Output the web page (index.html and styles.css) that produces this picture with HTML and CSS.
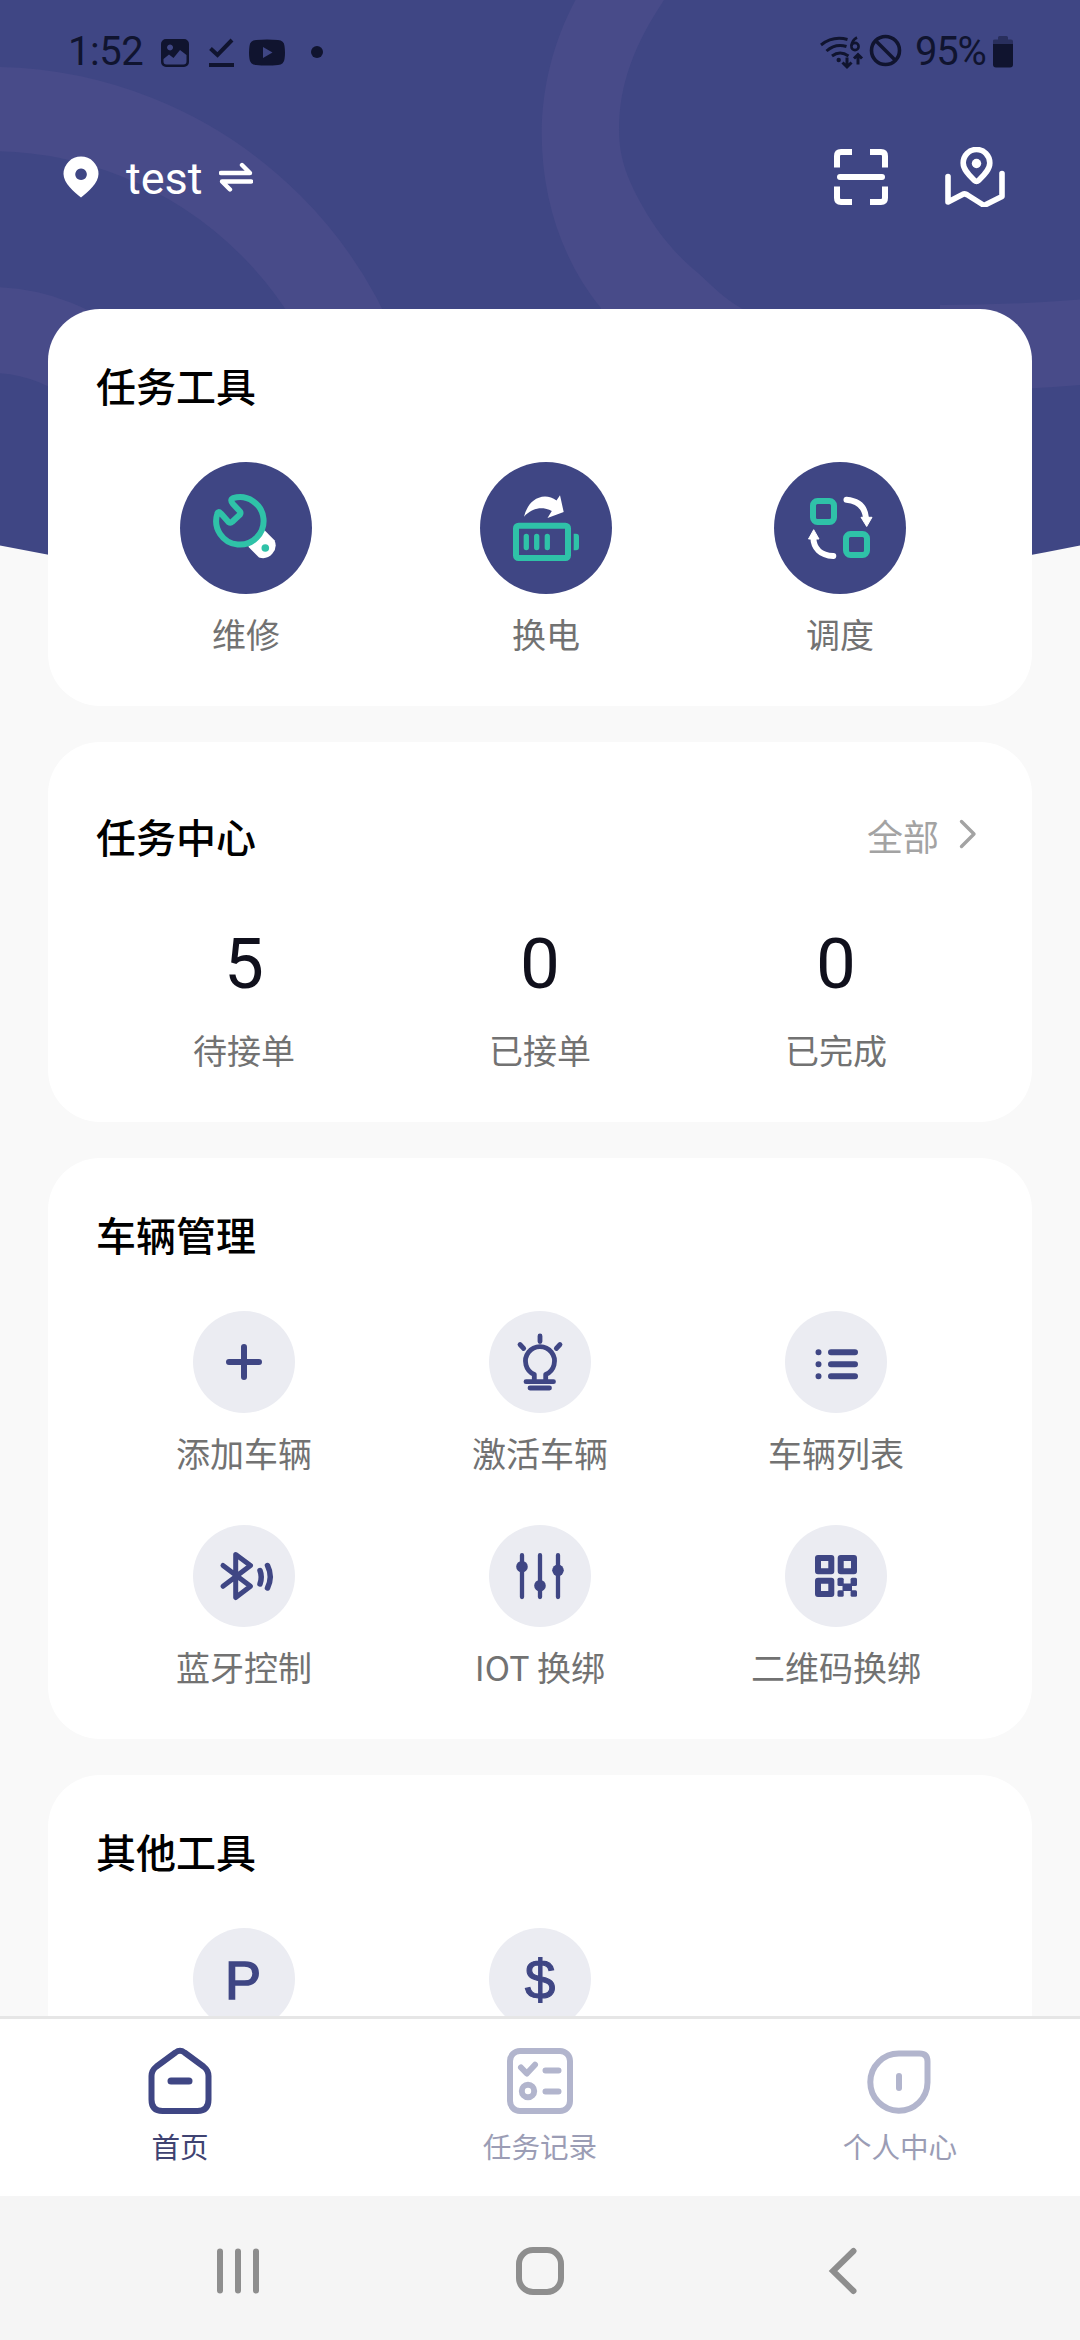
FILE: index.html
```html
<!DOCTYPE html>
<html lang="zh-CN">
<head>
<meta charset="utf-8">
<title>首页</title>
<link rel="stylesheet" href="styles.css">
</head>
<body>
<div class="screen">
  <svg class="backdrop" viewBox="0 0 1080 602" aria-hidden="true">
    <path class="backdrop-base" d="M0 0H1080V545.500Q540 655 0 545.500Z"/>
    <g class="backdrop-rings">
      <circle cx="-10" cy="506" r="397" stroke-width="84"/>
      <circle cx="-10" cy="506" r="176" stroke-width="86"/>
      <path class="solid" d="M575.500 0C553 42 542 88 541.700 133C541.700 195 560 258 601 308V330H780L741 308C725 299 711 285 698 273C675 254 657 232 643 207C629 182 619 160 619 130C619 85 634 45 664 0Z"/>
      <path class="solid" d="M940 305Q1010 305 1080 299.500V385Q1010 391 940 391Z"/>
    </g>
  </svg>

  <div class="status">
    <span class="clock">1:52</span>
    <svg class="status-left" width="170" height="36" viewBox="158 34 170 36">
      <path fill-rule="evenodd" d="M166 39H184a5 5 0 0 1 5 5V62a5 5 0 0 1-5 5H166a5 5 0 0 1-5-5V44a5 5 0 0 1 5-5ZM170 44.500a3 3 0 1 0 .1 0ZM163.500 59V61.500a3 3 0 0 0 3 3H183.500a3 3 0 0 0 3-3V55L180 50L173.500 58L169 54.500Z"/>
      <path class="line" stroke-width="4" d="M210.500 48.500L217.500 55L232 40M209 65H234"/>
      <path fill-rule="evenodd" d="M256 40Q267 39 278 40Q284 40.500 284.500 46Q285.500 53 284.500 59Q284 64.500 278 65Q267 66 256 65Q250 64.500 249.500 59Q248.500 53 249.500 46Q250 40.500 256 40ZM263 47V58L272.500 52.500Z"/>
      <circle cx="317" cy="52" r="6"/>
    </svg>
    <svg class="status-wifi" width="84" height="38" viewBox="819 33 84 38">
      <path class="line" stroke-width="3" d="M821 45Q833 35.500 847.500 39.500M826.500 51Q835.500 43 846.500 46.500M832 56Q840 50 848.500 56M847 57.500V66M842.500 62.500L847 67L851.500 62.500M858 64.500V54.500M854 58.500L858 54.500L862 58.500"/>
      <circle cx="838.700" cy="60" r="2.200"/>
      <circle class="line" cx="855" cy="46.500" r="3.600" stroke-width="2.600"/>
      <path class="line" stroke-width="2.600" d="M857 37.500Q852 40 851.500 46"/>
      <circle class="line" cx="885.500" cy="50.500" r="14" stroke-width="3.600"/>
      <path class="line" stroke-width="3.600" d="M876 41L895 60"/>
    </svg>
    <span class="battery-text">95%</span>
    <svg class="battery" width="20" height="32" viewBox="0 0 20 32">
      <path opacity=".45" d="M0 8V4.500Q0 3.500 2 3.500H5V1.500Q5 0 6.500 0H13.500Q15 0 15 1.500V3.500H18Q20 3.500 20 5.500V8Z"/>
      <path d="M0 8H20V28.500Q20 31.500 17 31.500H3Q0 31.500 0 28.500Z"/>
    </svg>
  </div>

  <header class="topbar">
    <svg width="36" height="42" viewBox="0 0 36 42" fill="#fff"><path fill-rule="evenodd" d="M18 .5A17.500 17.500 0 0 1 35.500 18C35.500 27 25 36 18 41.500C11 36 .5 27 .5 18A17.500 17.500 0 0 1 18 .5ZM18 12.500a5.800 5.800 0 1 0 .1 0Z"/></svg>
    <span class="site">test</span>
    <svg class="swap" width="34" height="30" viewBox="0 0 34 30"><path d="M2 11H31L23 3M32 19.500H3L11 27.500"/></svg>
    <svg class="scan" width="54" height="56" viewBox="0 0 54 56"><path d="M18 3H7Q3 3 3 7V18.500M36 3H47Q51 3 51 7V18.500M18 53H7Q3 53 3 49V37.500M36 53H47Q51 53 51 49V37.500"/><path class="round" d="M6 28H48"/></svg>
    <svg class="map" width="60" height="60" viewBox="0 0 60 60"><path d="M31.500 2.500C39 2.500 44.800 8.500 44.800 16C44.800 23 38 29 33.500 33.500Q31.500 35.500 29.500 33.500C25 29 18.200 23 18.200 16C18.200 8.500 24 2.500 31.500 2.500ZM3 29.500V55L17.500 47.500Q20 46 22.500 48L37.500 57.500Q39 58.500 41 57.500L57 49.500V26.500"/><circle cx="31.500" cy="16.500" r="4.700"/></svg>
  </header>

  <main class="cards">
    <section class="card card-tools">
      <h2>任务工具</h2>
      <div class="grid grid-tools">
        <div class="item">
          <svg class="disc" viewBox="0 0 132 132"><circle class="disc-dark" cx="66" cy="66" r="66"/>
            <path fill="#fff" d="M84.300 68L94.500 78.200A12.800 12.800 0 0 1 79 95.500L68.300 84.700Z"/>
            <path class="teal-line" stroke-width="6" d="M53 42L60 49.500Q61 51 60 52.500L52 60Q50.500 61.500 48.500 60L41 51.500Q38 48.500 37.200 52A23.700 23.700 0 1 0 53 36.200Q49.500 38 53 42Z"/>
            <circle class="teal" cx="85.300" cy="86" r="3.800"/></svg>
          <span>维修</span>
        </div>
        <div class="item">
          <svg class="disc" viewBox="0 0 132 132"><circle class="disc-dark" cx="66" cy="66" r="66"/>
            <path fill="#fff" d="M44 54.700C47 43 54 35 65 34.500Q71 34.500 76.500 38.500L80 33.300L83.700 50L67.500 56L71.800 49C62 43.500 51 46.500 44 54.700Z"/>
            <rect class="teal-line" x="36" y="63.700" width="52" height="32.300" rx="2.500" stroke-width="6"/>
            <path class="teal-line" stroke-width="5.300" d="M46.300 74.500V85.500M56.700 74.500V85.500M67.300 74.500V85.500"/>
            <path class="teal" d="M93.700 71.700H96Q99 71.700 99 75V85Q99 88.300 96 88.300H93.700Z"/></svg>
          <span>换电</span>
        </div>
        <div class="item">
          <svg class="disc" viewBox="0 0 132 132"><circle class="disc-dark" cx="66" cy="66" r="66"/>
            <rect class="teal-line" x="39" y="39" width="21" height="21" rx="4.500" stroke-width="6"/>
            <rect class="teal-line" x="72" y="72" width="21" height="21" rx="4.500" stroke-width="6"/>
            <path class="white-line" d="M72.500 37.800C85 39 91 45 92 56M59.300 94C46 93.500 39.500 86 39.300 75"/>
            <path fill="#fff" stroke="#fff" stroke-linejoin="round" d="M87 55.300H98L92.700 64.500ZM34.500 77H45L39.700 67.700Z"/></svg>
          <span>调度</span>
        </div>
      </div>
    </section>

    <section class="card card-center">
      <div class="card-head">
        <h2>任务中心</h2>
        <span class="more">全部</span>
        <svg class="chevron" width="18" height="30" viewBox="0 0 18 30"><path d="M2.500 2.500L15 15L2.500 27.500"/></svg>
      </div>
      <div class="grid">
        <div class="stat"><b>5</b><span>待接单</span></div>
        <div class="stat"><b>0</b><span>已接单</span></div>
        <div class="stat"><b>0</b><span>已完成</span></div>
      </div>
    </section>

    <section class="card card-vehicles">
      <h2>车辆管理</h2>
      <div class="grid">
        <div class="item">
          <svg class="dot" viewBox="0 0 102 102"><circle class="disc-light" cx="51" cy="51" r="51"/><path class="ink" stroke-width="6" d="M51 36V66M36 51H66"/></svg>
          <span>添加车辆</span>
        </div>
        <div class="item">
          <svg class="dot" viewBox="0 0 102 102"><circle class="disc-light" cx="51" cy="51" r="51"/>
            <path class="ink" stroke-width="4.800" d="M45.300 69V63.500A14.500 14.500 0 1 1 56.700 63.500V69M37 70.700H64.500M41 77H60.500M51 25V30.500M31 33.500L34.700 37.500M71 33.500L67.300 37.500"/></svg>
          <span>激活车辆</span>
        </div>
        <div class="item">
          <svg class="dot" viewBox="0 0 102 102"><circle class="disc-light" cx="51" cy="51" r="51"/><path class="ink" stroke-width="6" d="M33.500 41.200h.01M33.500 53.200h.01M33.500 65.200h.01M46 41.200H70M46 53.200H70M46 65.200H70"/></svg>
          <span>车辆列表</span>
        </div>
        <div class="item">
          <svg class="dot" viewBox="0 0 102 102"><circle class="disc-light" cx="51" cy="51" r="51"/><path class="ink" stroke-width="5" d="M30 40.500L57.500 61.300L42.700 72.500V29.500L57.500 40.500L30 61.300"/><path class="ink" stroke-width="5.500" d="M67 45.500Q69.500 52 67 59M74.500 40.500Q80 51.500 74.500 63"/></svg>
          <span>蓝牙控制</span>
        </div>
        <div class="item">
          <svg class="dot" viewBox="0 0 102 102"><circle class="disc-light" cx="51" cy="51" r="51"/><path class="ink" stroke-width="4.300" d="M33 30.200V72M51 30.200V72M69 30.200V72"/><g class="ink-fill"><circle cx="33" cy="41.700" r="5.800"/><circle cx="51" cy="60.700" r="5.800"/><circle cx="69" cy="45.300" r="5.800"/></g></svg>
          <span>IOT 换绑</span>
        </div>
        <div class="item">
          <svg class="dot" viewBox="0 0 102 102"><circle class="disc-light" cx="51" cy="51" r="51"/>
            <path class="ink" stroke-width="6" d="M33 33H46.300V46.300H33ZM55.700 33H69V46.300H55.700ZM33 55.700H46.300V69H33Z"/>
            <g class="ink-fill"><rect x="52.500" y="52.700" width="6.200" height="8.200" rx="1.500"/><rect x="65.600" y="52.700" width="6.400" height="8.200" rx="1.500"/><rect x="57.500" y="58.500" width="9.500" height="7.500"/><rect x="52.500" y="65.200" width="6.200" height="6.600" rx="1.500"/><rect x="65.600" y="65.200" width="6.400" height="6.600" rx="1.500"/></g></svg>
          <span>二维码换绑</span>
        </div>
      </div>
    </section>

    <section class="card card-others">
      <h2>其他工具</h2>
      <div class="grid">
        <div class="item"><div class="letter letter-p">P</div></div>
        <div class="item"><div class="letter">$</div></div>
      </div>
    </section>
  </main>

  <nav class="tabs">
    <div class="tab tab-active">
      <svg width="72" height="72" viewBox="0 0 72 72"><path stroke-width="6" d="M31.500 7.500Q36 4 40.500 7.500L59.500 21.500Q64.500 25.500 64.500 31V54.500Q64.500 66 53.500 66H18.500Q7.500 66 7.500 54.500V31Q7.500 25.500 12.500 21.500Z"/><path stroke-width="7" d="M27 36H45"/></svg>
      <span>首页</span>
    </div>
    <div class="tab">
      <svg width="72" height="72" viewBox="0 0 72 72"><rect x="6" y="6" width="60" height="60" rx="10" stroke-width="6"/><path stroke-width="6" d="M17 22.500L22.800 28.500L31 19.800M41.500 25.500H54.500M41.500 46.500H54.500"/><circle cx="24" cy="46" r="6.200" stroke-width="6"/></svg>
      <span>任务记录</span>
    </div>
    <div class="tab">
      <svg width="72" height="72" viewBox="0 0 72 72"><path stroke-width="6" d="M35 8.500H55.500Q63.500 8.500 63.500 16.500V37.500A28.600 28.600 0 1 1 35 8.500Z"/><path stroke-width="6" d="M35 31V43"/></svg>
      <span>个人中心</span>
    </div>
  </nav>

  <footer class="sysnav">
    <svg width="48" height="50" viewBox="0 0 48 50"><path d="M6 5.500V44.500M24 5.500V44.500M42 5.500V44.500"/></svg>
    <svg width="48" height="50" viewBox="0 0 48 50"><rect x="3" y="4" width="42" height="42" rx="14"/></svg>
    <svg width="48" height="50" viewBox="0 0 48 50"><path d="M35.500 5L15 25L35.500 45"/></svg>
  </footer>
</div>
</body>
</html>
```
FILE: styles.css
```css
* { box-sizing: border-box; }

body {
  margin: 0;
  background: #f9f9f9;
  font-family: "Noto Sans CJK SC", sans-serif;
}

.screen {
  position: relative;
  display: flex;
  flex-direction: column;
  width: 1080px;
  height: 2340px;
  overflow: hidden;
}

svg { display: block; flex: none; }

/* Curved header artwork behind the content */
.backdrop {
  position: absolute;
  top: 0;
  left: 0;
  width: 1080px;
  height: 602px;
}
.backdrop-base { fill: #3f4684; }
.backdrop-rings { fill: none; stroke: #484b89; }
.backdrop-rings .solid { fill: #484b89; stroke: none; }

.status, .topbar, .cards { position: relative; }

.status {
  display: flex;
  align-items: flex-start;
  flex: none;
  height: 100px;
  padding: 0 67px 0 68px;
  color: #10142f;
  fill: #10142f;
  font-family: Roboto, sans-serif;
  font-size: 40px;
  font-weight: 400;
  line-height: 44px;
}
.status .line { fill: none; stroke: #10142f; }
.clock { width: 90px; padding-top: 30px; letter-spacing: -0.5px; }
.status-left { margin-top: 34px; }
.status-wifi { margin: 33px 12px 0 auto; }
.battery-text { width: 77px; padding-top: 30px; letter-spacing: -1.2px; }
.battery { margin: 36px 0 0 1px; }

.topbar {
  display: flex;
  align-items: center;
  flex: none;
  height: 154px;
  padding: 0 75px 0 63px;
  color: #fff;
  font-family: Roboto, sans-serif;
}
.site {
  margin-left: 27px;
  padding-top: 4px;
  font-size: 45px;
  line-height: 50px;
}
.swap, .scan, .map { fill: none; stroke: #fff; }
.swap { margin-left: 16px; stroke-width: 4.4; stroke-linecap: round; stroke-linejoin: round; }
.scan { margin-left: auto; stroke-width: 6; }
.scan .round { stroke-linecap: round; }
.map { margin: -1px 0 0 57px; stroke-width: 5.6; stroke-linecap: round; stroke-linejoin: round; }
.map circle { fill: #fff; stroke: none; }

.cards {
  display: flex;
  flex: none;
  flex-direction: column;
  gap: 36px;
  height: 1762px;
  padding: 55px 48px 0;
  overflow: hidden;
}
.card {
  flex: none;
  padding: 0 48px;
  border-radius: 52px;
  background: #fff;
}
.card-tools { height: 397px; }
.card-center { height: 380px; }
.card-vehicles { height: 581px; }
.card-others { height: 400px; }

h2 {
  height: 153px;
  margin: 0;
  padding-top: 46px;
  color: #000;
  font-size: 40px;
  font-weight: 500;
  line-height: 60px;
}
.card-head {
  display: flex;
  align-items: center;
  height: 182px;
  padding: 5px 7px 0 0;
}
.card-head h2 { height: 60px; padding: 0; }
.more { margin: -1px 0 0 auto; color: #a3a3a3; font-size: 36px; line-height: 54px; }
.chevron { margin: -3px 0 0 20px; fill: none; stroke: #a3a3a3; stroke-width: 3.4; stroke-linecap: round; stroke-linejoin: round; }

.grid {
  display: grid;
  grid-template-columns: repeat(3, 296px);
  row-gap: 47px;
}
.grid-tools { grid-template-columns: 300px 300px 288px; }
.item, .stat {
  display: flex;
  flex-direction: column;
  align-items: center;
}
.item span, .stat span {
  color: #727272;
  font-size: 34px;
  line-height: 50px;
}
.item span { margin-top: 15px; }
.stat b { color: #10101c; font-family: Roboto, sans-serif; font-size: 71px; font-weight: 400; line-height: 80px; }
.stat span { margin-top: 21px; }

.disc { width: 132px; height: 132px; }
.dot, .letter { width: 102px; height: 102px; }
.letter {
  border-radius: 50%;
  background: #ebecf2;
  color: #3f4684;
  font-family: "Liberation Sans", sans-serif;
  font-size: 55px;
  line-height: 105px;
  text-align: center;
  -webkit-text-stroke: 1.1px #3f4684;
}
.letter-p { padding-right: 2px; font-size: 54px; -webkit-text-stroke-width: 1.6px; }

.disc-dark { fill: #3f4684; }
.disc-light { fill: #ebecf2; }
.teal { fill: #2fc2a8; }
.teal-line { fill: none; stroke: #2fc2a8; stroke-linecap: round; stroke-linejoin: round; }
.white-line { fill: none; stroke: #fff; stroke-width: 6; stroke-linecap: round; }
.ink { fill: none; stroke: #3f4684; stroke-linecap: round; stroke-linejoin: round; }
.ink-fill { fill: #3f4684; }

.tabs {
  display: flex;
  flex: none;
  height: 180px;
  border-top: 3px solid #e6e6e6;
  background: #fff;
}
.tab {
  display: flex;
  flex: 1;
  flex-direction: column;
  align-items: center;
  padding-top: 26px;
  color: #9b9db5;
  stroke: #b2b5cd;
  font-size: 28.6px;
  line-height: 42px;
}
.tab svg { fill: none; stroke-linecap: round; stroke-linejoin: round; }
.tab span { margin-top: 8px; stroke: none; }
.tab-active { color: #3f4372; stroke: #3f4684; }

.sysnav {
  display: flex;
  align-items: center;
  justify-content: space-between;
  flex: none;
  height: 144px;
  padding: 6px 214px 0;
  background: #f5f5f5;
  fill: none;
  stroke: #8e8e8e;
  stroke-width: 6;
  stroke-linecap: round;
}
```
